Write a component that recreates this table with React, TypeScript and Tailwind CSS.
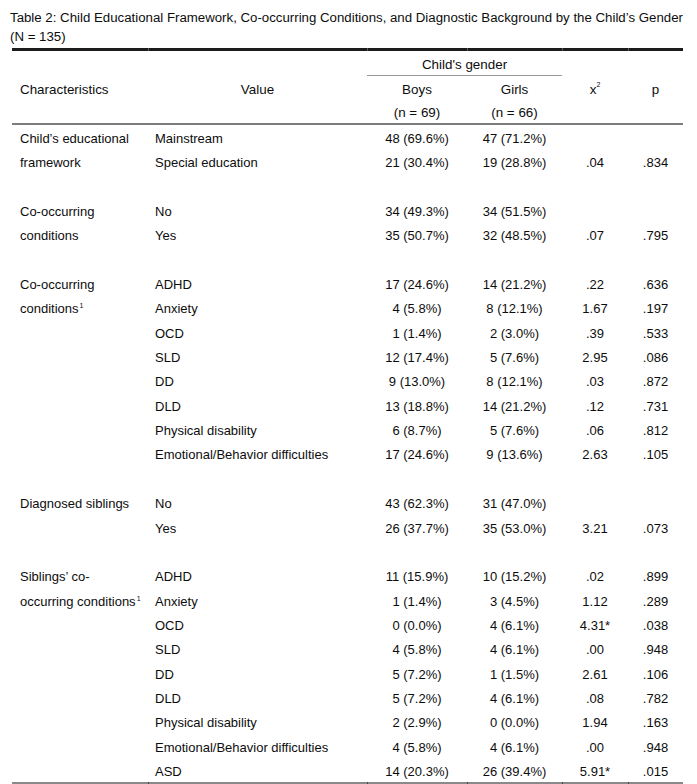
import React from 'react';

type Item = [string, string, string, string, string];
type Group = { label: React.ReactNode[]; items: Item[] };

const Sup = () => <sup className="text-[7px] relative -top-[5px] ml-[1px]">1</sup>;

const GROUPS: Group[] = [
    {
        label: ['Child’s educational', 'framework'],
        items: [
            ['Mainstream', '48 (69.6%)', '47 (71.2%)', '', ''],
            ['Special education', '21 (30.4%)', '19 (28.8%)', '.04', '.834'],
        ],
    },
    {
        label: ['Co-occurring', 'conditions'],
        items: [
            ['No', '34 (49.3%)', '34 (51.5%)', '', ''],
            ['Yes', '35 (50.7%)', '32 (48.5%)', '.07', '.795'],
        ],
    },
    {
        label: ['Co-occurring', <>conditions<Sup /></>],
        items: [
            ['ADHD', '17 (24.6%)', '14 (21.2%)', '.22', '.636'],
            ['Anxiety', '4 (5.8%)', '8 (12.1%)', '1.67', '.197'],
            ['OCD', '1 (1.4%)', '2 (3.0%)', '.39', '.533'],
            ['SLD', '12 (17.4%)', '5 (7.6%)', '2.95', '.086'],
            ['DD', '9 (13.0%)', '8 (12.1%)', '.03', '.872'],
            ['DLD', '13 (18.8%)', '14 (21.2%)', '.12', '.731'],
            ['Physical disability', '6 (8.7%)', '5 (7.6%)', '.06', '.812'],
            ['Emotional/Behavior difficulties', '17 (24.6%)', '9 (13.6%)', '2.63', '.105'],
        ],
    },
    {
        label: ['Diagnosed siblings'],
        items: [
            ['No', '43 (62.3%)', '31 (47.0%)', '', ''],
            ['Yes', '26 (37.7%)', '35 (53.0%)', '3.21', '.073'],
        ],
    },
    {
        label: ['Siblings’ co-', <>occurring conditions<Sup /></>],
        items: [
            ['ADHD', '11 (15.9%)', '10 (15.2%)', '.02', '.899'],
            ['Anxiety', '1 (1.4%)', '3 (4.5%)', '1.12', '.289'],
            ['OCD', '0 (0.0%)', '4 (6.1%)', '4.31*', '.038'],
            ['SLD', '4 (5.8%)', '4 (6.1%)', '.00', '.948'],
            ['DD', '5 (7.2%)', '1 (1.5%)', '2.61', '.106'],
            ['DLD', '5 (7.2%)', '4 (6.1%)', '.08', '.782'],
            ['Physical disability', '2 (2.9%)', '0 (0.0%)', '1.94', '.163'],
            ['Emotional/Behavior difficulties', '4 (5.8%)', '4 (6.1%)', '.00', '.948'],
            ['ASD', '14 (20.3%)', '26 (39.4%)', '5.91*', '.015'],
        ],
    },
];

const cols = 'grid grid-cols-[136px_219px_100px_95px_66px_55px]';
const cell = 'pt-[4px] leading-[20px] whitespace-nowrap';

// rule split into cells, the joins show as small ticks like in the source doc
const Rule = ({ h, bg, tick }: { h: string; bg: string; tick: string }) => (
    <div className={`${cols} ${h}`}>
        {[0, 1, 2, 3, 4, 5].map(i => (
            <div key={i} className={`${bg} ${i > 0 ? `border-l ${tick}` : ''}`} />
        ))}
    </div>
);

const App: React.FC = () => {
    return (
        <div className="w-[697px] h-[784px] bg-white text-[#0d0d0d] overflow-hidden font-['Liberation_Sans',Arial,sans-serif]">
            <div className="pl-[10px] pt-[8px] text-[13.25px] leading-[19px] whitespace-nowrap">
                <p>Table 2: Child Educational Framework, Co-occurring Conditions, and Diagnostic Background by the Child’s Gender</p>
                <p>(N = 135)</p>
            </div>

            <div className="ml-[12px] w-[671px] mt-[2px] text-[13px]">
                <Rule h="h-[3px]" bg="bg-[#1c1c1c]" tick="border-[#5a5a5a]" />

                {/* header */}
                <div className={`${cols} grid-rows-[25px_25px_20px] pt-[2px] text-[13.4px]`}>
                    <div className="row-span-3 flex items-center pl-[8px] pt-[4px]">Characteristics</div>
                    <div className="row-span-3 flex items-center justify-center pt-[4px]">Value</div>
                    <div className="col-span-2 flex flex-col justify-end items-stretch">
                        <div className="text-center leading-[19px]">Child's gender</div>
                        <div className="h-[1px] bg-[#9a9a9a] mt-[1px] mb-[2px]" />
                    </div>
                    <div className="row-span-3 flex items-center justify-center pt-[4px]">
                        x<sup className="text-[7px] relative -top-[5px]">2</sup>
                    </div>
                    <div className="row-span-3 flex items-center justify-center pt-[4px]">p</div>
                    <div className="flex items-center justify-center">Boys</div>
                    <div className="flex items-center justify-center">Girls</div>
                    <div className="flex items-center justify-center">(n = 69)</div>
                    <div className="flex items-center justify-center">(n = 66)</div>
                </div>
                <div className="h-[2px] bg-[#7d7d7d]" />

                {/* body */}
                {GROUPS.map((g, gi) => (
                    <div key={gi}>
                        {gi > 0 && <div className="h-[24.35px]" />}
                        {g.items.map((it, ri) => (
                            <div key={ri} className={`${cols} h-[24.35px]`}>
                                <div className={`${cell} pl-[8px]`}>{g.label[ri] ?? ''}</div>
                                <div className={`${cell} pl-[7px]`}>{it[0]}</div>
                                <div className={`${cell} text-center`}>{it[1]}</div>
                                <div className={`${cell} text-center`}>{it[2]}</div>
                                <div className={`${cell} text-center`}>{it[3]}</div>
                                <div className={`${cell} text-center`}>{it[4]}</div>
                            </div>
                        ))}
                    </div>
                ))}
                <Rule h="h-[2px]" bg="bg-[#8a8a8a]" tick="border-[#4a4a4a]" />
            </div>
        </div>
    );
};

export default App;
